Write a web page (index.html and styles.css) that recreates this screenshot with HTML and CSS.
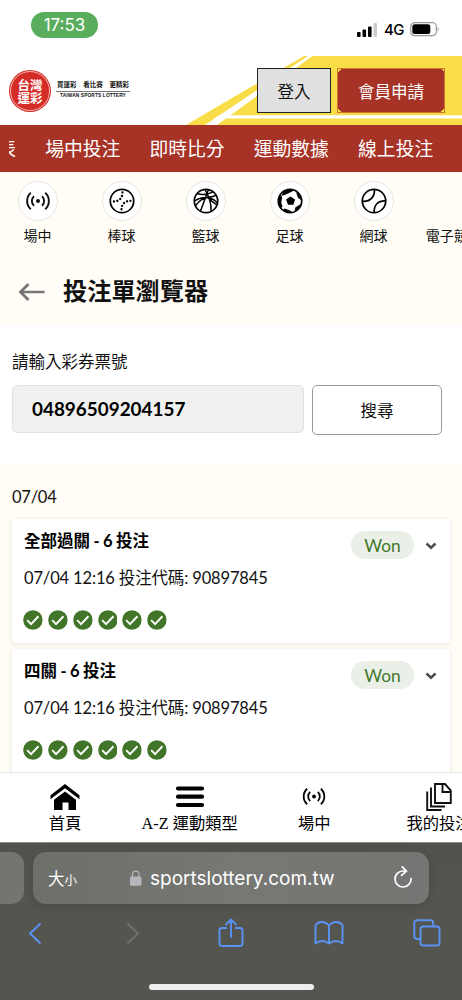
FILE: index.html
```html
<!DOCTYPE html>
<html lang="zh-Hant">
<head>
<meta charset="utf-8">
<title>台灣運彩</title>
<link rel="stylesheet" href="styles.css">
</head>
<body>
<svg class="defs" width="0" height="0">
  <symbol id="live" viewBox="0 0 24 20"><circle cx="12" cy="10" r="2" fill="currentColor"/><g fill="none" stroke="currentColor" stroke-width="1.9"><path d="M8 5.2a6.5 6.5 0 0 0 0 9.6M16 5.2a6.5 6.5 0 0 1 0 9.6M4.8 1.8a11 11 0 0 0 0 16.4M19.2 1.8a11 11 0 0 1 0 16.4"/></g></symbol>
  <symbol id="check" viewBox="0 0 20 20"><circle cx="10" cy="10" r="9.8" fill="#41762a"/><path d="M4.2 10.2l3.9 3.9 7.5-7.9" fill="none" stroke="#fff" stroke-width="1.9"/></symbol>
  <symbol id="down" viewBox="0 0 12 8"><path d="M1.500 1.500L6 5.700l4.500-4.200" fill="none" stroke="#4c4c4c" stroke-width="2.500"/></symbol>
</svg>
<div class="status">
  <span class="clock">17:53</span>
  <div class="signal">
    <svg width="20" height="14" viewBox="0 0 20 14"><rect y="9" width="3.600" height="5" rx="1"/><rect x="5.500" y="6.500" width="3.600" height="7.500" rx="1"/><rect x="11" y="3.500" width="3.600" height="10.500" rx="1"/><rect x="16.500" width="3.500" height="14" rx="1" fill="#ccc"/></svg>
    <span class="net">4G</span>
    <svg width="30" height="15" viewBox="0 0 30 15"><rect x=".7" y=".7" width="25.600" height="13" rx="4" fill="none" stroke="#999" stroke-width="1.200"/><rect x="2.300" y="2.300" width="18" height="9.800" rx="2.500"/><path d="M27.600 5q2.200 2.200 0 4.400z" fill="#999"/></svg>
  </div>
</div>
<header class="header">
  <svg class="court" width="462" height="69" viewBox="0 0 462 69">
    <path d="M304 0H462V69H186Z" fill="#f9dd48"/>
    <path d="M308 0h4.500L217 69H205ZM219 59.200H462v3.200H214Z" fill="#fff"/>
  </svg>
  <div class="logo"><div class="seal"><span>台灣</span><span>運彩</span></div></div>
  <div class="slogan"><div class="zh"><span>買運彩</span><span>看比賽</span><span>更精彩</span></div><div class="en">TAIWAN SPORTS LOTTERY</div></div>
  <button class="login">登入</button>
  <button class="join">會員申請</button>
</header>
<nav class="nav"><div class="nav-clip"><div class="nav-items"><span>賽事表</span><span>場中投注</span><span>即時比分</span><span>運動數據</span><span>線上投注</span></div></div></nav>
<div class="sports">
  <div class="sport"><i class="ring"><svg width="24" height="20"><use href="#live"/></svg></i><span>場中</span></div>
  <div class="sport"><i class="ring"><svg width="26" height="26" viewBox="0 0 26 26" fill="none" stroke="#000"><circle cx="13" cy="13" r="11.700" stroke-width="1.700"/><path d="M13.500 4.500C13.500 10 10 13.500 4.500 13.500M21.500 12.800C16 12.800 12.500 16 12.500 21.500" stroke-width="2.300" stroke-dasharray="0.100 3.350" stroke-linecap="round"/></svg></i><span>棒球</span></div>
  <div class="sport"><i class="ring"><svg width="26" height="26" viewBox="0 0 26 26" fill="none" stroke="#000" stroke-width="1.500"><circle cx="13" cy="13" r="11.700" stroke-width="1.700"/><path d="M4 5.500Q12 8 20 3.800M1.500 13Q9 8 17 10Q22 11.500 24.500 15M2.700 17.500Q9 9 16 9.500M7.500 23Q12 11 15.500 1.600M18 23.500Q19 14 12 1.500M14 9Q21 9 23 7M14 9Q18 13 24 17"/></svg></i><span>籃球</span></div>
  <div class="sport"><i class="ring"><svg width="26" height="26" viewBox="0 0 26 26"><circle cx="13" cy="13" r="11.700" fill="none" stroke="#000" stroke-width="1.700"/><path d="M13.500 8.500l4.600 3.100-1.700 5.200h-5.400l-2-5.200zM7 3.200l6-2 3.500 1.500-5 2.600-4 1.800-3.500 1zM19.500 3.500l3.800 4.500.8 4-3-2-1.500-4zM24 16l-2.500 5-4 2.500.8-4 3-2zM15.500 24.500l-5 .1-4.500-2.300 1.200-1.900 5 1.500zM1.500 16L1.300 11l1.900-4.300 2 2.600-1 5.500 1.400 4-1.600 1z"/></svg></i><span>足球</span></div>
  <div class="sport"><i class="ring"><svg width="26" height="26" viewBox="0 0 26 26" fill="none" stroke="#000" stroke-width="1.700"><circle cx="13" cy="13" r="11.700"/><path d="M13.400 1.500C14 9 9 13.800 1.600 13.300M24.600 12.800C17 12.500 12.700 17 13.200 24.600"/></svg></i><span>網球</span></div>
  <div class="sport last"><i class="ring blank"></i><span>電子競技</span></div>
</div>
<div class="title"><svg width="26" height="18" viewBox="0 0 26 18"><path d="M25.500 9H2M9.500 1L1.500 9l8 8" fill="none" stroke="#757575" stroke-width="2.700"/></svg><h1>投注單瀏覽器</h1></div>
<section class="form">
  <label>請輸入彩券票號</label>
  <div class="form-row"><div class="field">04896509204157</div><button class="search">搜尋</button></div>
</section>
<main class="list">
  <div class="date">07/04</div>
  <article class="card">
    <div class="card-top"><h2>全部過關 - 6 投注</h2><span class="won">Won</span><svg class="arrow" width="12" height="8"><use href="#down"/></svg></div>
    <p>07/04 12:16 投注代碼: 90897845</p>
    <div class="checks"><svg><use href="#check"/></svg><svg><use href="#check"/></svg><svg><use href="#check"/></svg><svg><use href="#check"/></svg><svg><use href="#check"/></svg><svg><use href="#check"/></svg></div>
  </article>
  <article class="card">
    <div class="card-top"><h2>四關 - 6 投注</h2><span class="won">Won</span><svg class="arrow" width="12" height="8"><use href="#down"/></svg></div>
    <p>07/04 12:16 投注代碼: 90897845</p>
    <div class="checks"><svg><use href="#check"/></svg><svg><use href="#check"/></svg><svg><use href="#check"/></svg><svg><use href="#check"/></svg><svg><use href="#check"/></svg><svg><use href="#check"/></svg></div>
  </article>
</main>
<nav class="tabs">
  <div class="tab"><div class="tab-icon"><svg width="30" height="26" viewBox="0 0 30 26"><path d="M15 0L29.500 11.200v4L15 4.300.5 15.200v-4zM15 7.400L26 15.700V26H18.500V18.500h-6V26H4V15.700z"/></svg></div><span>首頁</span></div>
  <div class="tab"><div class="tab-icon"><svg width="30" height="22" viewBox="0 0 30 22"><path d="M3 2.500H27M3 10.700H27M3 19H27" stroke="#000" stroke-width="4.200" stroke-linecap="round"/></svg></div><span>A-Z 運動類型</span></div>
  <div class="tab"><div class="tab-icon"><svg width="24" height="19"><use href="#live"/></svg></div><span>場中</span></div>
  <div class="tab"><div class="tab-icon"><svg width="26" height="28" viewBox="0 0 26 28" fill="none" stroke="#111" stroke-width="1.900"><path d="M9 1h10l5.800 6.500V20H9zM16.500 1v8H24.500M5 4.500V23.500H19M1.200 8.500V27H15.500"/></svg></div><span>我的投注</span></div>
</nav>
<footer class="browser">
  <div class="bar">
    <div class="prev"></div>
    <div class="url"><span class="size">大<small>小</small></span>
      <svg class="lock" width="12" height="16" viewBox="0 0 12 16"><rect y="6.500" width="11.500" height="9.300" rx="1.500" fill="#b7b6bc"/><path d="M2.500 7V4.300a3.250 3.250 0 0 1 6.500 0V7" fill="none" stroke="#b7b6bc" stroke-width="1.300"/></svg>
      <span class="domain">sportslottery.com.tw</span>
      <svg class="reload" width="20" height="22" viewBox="0 0 20 22"><path d="M11.500 5H10A8 8 0 1 0 18 12.500M9.200.8l4.300 4.300-5 4.300" fill="none" stroke="#fff" stroke-width="1.700" stroke-linecap="round" stroke-linejoin="round"/></svg>
    </div>
  </div>
  <div class="tools">
    <svg width="14" height="23" viewBox="0 0 14 23"><path d="M12.500 1.500L2 11.500l10.500 10"/></svg>
    <svg width="14" height="23" viewBox="0 0 14 23"><path class="off" d="M1.500 1.500L12 11.500l-10.500 10"/></svg>
    <svg width="26" height="30" viewBox="0 0 26 30"><path d="M9 10H4q-2.500 0-2.500 2.500v13Q1.500 28 4 28H22q2.500 0 2.500-2.500v-13Q24.500 10 22 10H17M13 19.500V1.500M7.500 7L13 1.500 18.500 7"/></svg>
    <svg width="30" height="24" viewBox="0 0 30 24"><path d="M15 4.500Q12 1 8 1T1.500 4V22.500Q8 17.500 15 22.500 22 17.500 28.500 22.500V4Q26 1 22 1T15 4.500V22"/></svg>
    <svg width="28" height="28" viewBox="0 0 28 28"><rect x="7.500" y="7.500" width="19" height="19" rx="2.800"/><path d="M7 20H4q-2.700 0-2.700-2.700V4Q1.300 1.300 4 1.300H17.500q2.700 0 2.700 2.700V7"/></svg>
  </div>
  <div class="home"></div>
</footer>
</body>
</html>
```
FILE: styles.css
```css
* { box-sizing: border-box; }
body { margin: 0; width: 462px; height: 1000px; overflow: hidden; background: #fff; color: #111; font-family: Lato, "Noto Sans CJK TC", sans-serif; display: flex; flex-direction: column; }
h1, h2, p { margin: 0; }
button { font: inherit; padding: 0; border-radius: 0; }
svg { flex: none; display: block; }
.defs { position: absolute; }
.status { height: 56px; flex: none; display: flex; justify-content: space-between; padding: 12px 22px 0 31px; }
.clock { width: 67px; height: 26px; border-radius: 13px; background: #5aad5c; color: #fff; font: 400 17px/26px Inter, sans-serif; text-align: center; }
.signal { display: flex; gap: 7px; height: 15px; margin-top: 10px; align-items: center; }
.net { font: 500 15px/16px Inter, sans-serif; color: #000; width: 19px; letter-spacing: -0.500px; }
.header { position: relative; height: 69px; flex: none; display: flex; align-items: flex-start; padding: 12px 17px 0 9px; }
.court { position: absolute; left: 0; top: 0; }
.logo, .slogan, .login, .join { position: relative; }
.logo { width: 42px; height: 42px; margin-top: 2px; border-radius: 50%; background: #d62c27; padding: 1px; }
.seal { height: 40px; border: 1px solid #f5b5ad; border-radius: 50%; color: #fff; font: 700 12.500px/13px "Noto Sans CJK TC", sans-serif; display: flex; flex-direction: column; align-items: center; justify-content: center; }
.slogan { width: 74px; margin: 9px 0 0 5px; color: #111; }
.zh { display: flex; justify-content: space-between; padding: 0 1px; font: 700 6.500px/14px "Noto Sans CJK TC", sans-serif; border-bottom: 1px solid #777; }
.en { font: 700 4.800px/8px "Liberation Sans", sans-serif; text-align: center; white-space: nowrap; letter-spacing: 0.130px; }
.login { width: 74px; height: 45px; margin-left: auto; margin-right: 6px; border: 1.500px solid #222; background: #e0e0e0; font-size: 16.500px; color: #111; }
.join { width: 108px; height: 45px; border: 1px solid #cf752f; font-size: 16.500px; color: #fff; background: #a73226; }
.join::before, .join::after { content: ""; position: absolute; left: 0; right: 0; height: 3px; background: linear-gradient(45deg, transparent 0 50%, #f9dd48 50%) right / 3px 3px no-repeat, linear-gradient(-45deg, transparent 0 50%, #f9dd48 50%) left / 3px 3px no-repeat; top: 0; }
.join::after { top: auto; bottom: 0; transform: scaleY(-1); }
.nav { height: 47px; flex: none; background: #a73226; padding-left: 9px; }
.nav-clip { overflow: hidden; }
.nav-items { display: flex; gap: 29.200px; margin-left: -49.400px; width: 600px; color: #fff; font-size: 18.800px; line-height: 47px; white-space: nowrap; }
.sports { flex: none; height: 85px; background: #fffdf5; display: flex; padding-top: 9px; overflow: hidden; }
.sport { flex: none; width: 84px; display: flex; flex-direction: column; align-items: center; font-size: 14px; line-height: 20px; gap: 5px; }
.sport:first-child { width: 79.500px; padding-right: 4.500px; }
.last { width: 76.500px; }
.ring { width: 40px; height: 40px; border: 1px solid #e7e6e3; border-radius: 50%; background: #fff; display: flex; align-items: center; justify-content: center; }
.blank { visibility: hidden; }
.title { height: 69px; flex: none; background: #fffdf5; display: flex; align-items: center; gap: 18px; padding-left: 19px; }
.title h1 { font-size: 24.200px; line-height: 36px; font-weight: 700; margin-bottom: 2px; }
.form { height: 137px; flex: none; padding: 24px 20px 0 12px; }
.form label { display: block; font-size: 16.500px; line-height: 24px; }
.form-row { display: flex; margin-top: 11px; align-items: flex-start; gap: 8px; }
.field { width: 292px; height: 48px; border: 1px solid #e2e2e2; border-radius: 5px; background: #f0f0f0; padding-left: 19px; font-size: 18.900px; line-height: 45px; font-weight: 700; color: #000; }
.search { flex: 1; height: 50px; border: 1px solid #999; border-radius: 5px; background: #fff; font-size: 16.500px; color: #111; }
.list { height: 309px; flex: none; overflow: hidden; background: #fffdf5; padding: 22px 12px 0; }
.date { font-size: 16.500px; line-height: 25px; margin-bottom: 9px; letter-spacing: -0.250px; }
.card { height: 124px; margin-bottom: 6px; background: #fff; border-radius: 3px; box-shadow: 0 1px 4px #0000001c; padding: 12px 13px 0 12px; }
.card-top { display: flex; height: 28px; }
.card h2 { flex: 1; font-size: 16.500px; line-height: 20px; font-weight: 700; color: #000; word-spacing: -0.600px; }
.won { width: 63px; height: 28px; border-radius: 14px; background: #eaf0e8; color: #41762a; text-align: center; font-size: 17.300px; line-height: 30px; }
.arrow { margin: 11px 0 0 11px; }
.card p { font-size: 16.500px; line-height: 25px; margin-top: 7px; letter-spacing: -0.150px; }
.checks { display: flex; gap: 5px; margin: 19px 0 0 -1px; }
.checks svg { width: 19.850px; height: 20px; }
.tabs { height: 70px; flex: none; border-top: 1px solid #e5e5e5; background: #fff; display: flex; overflow: hidden; padding-left: 2.600px; }
.tab { flex: none; width: 124.700px; display: flex; flex-direction: column; align-items: center; font: 16.300px/24px "Liberation Serif", "Noto Sans CJK TC", sans-serif; color: #000; white-space: nowrap; }
.tab-icon { height: 39px; padding-top: 8px; display: flex; align-items: center; }
.browser { height: 158px; flex: none; background: linear-gradient(#51524d, #555550 50px); border-top: 1px solid #888; }
.bar { display: flex; gap: 9.500px; padding-top: 9px; }
.prev { width: 23.500px; height: 52px; border-radius: 0 13px 13px 0; background: #73766f; }
.url { width: 395.500px; height: 52px; border-radius: 13px; background: linear-gradient(90deg, #6c7069, #777774 50%, #757573); box-shadow: 0 3px 10px #0002; display: flex; align-items: center; color: #fff; padding-left: 15px; }
.size { font-size: 16.500px; width: 82px; }
.size small { font-size: 12.500px; }
.domain { font: 19px/24px Inter, sans-serif; margin: 2px 0 0 8px; width: 193px; white-space: nowrap; }
.reload { margin-left: auto; margin-right: 16px; margin-bottom: 2px; }
.tools { display: grid; grid-template-columns: repeat(5, 98px); justify-content: center; justify-items: center; align-items: center; height: 30px; margin-top: 14px; fill: none; stroke: #5b92f5; stroke-width: 1.900; stroke-linejoin: round; }
.tools .off { stroke: #70706d; }
.home { width: 165px; height: 6px; border-radius: 3px; background: #eee; margin: 36px auto 0; }
```
